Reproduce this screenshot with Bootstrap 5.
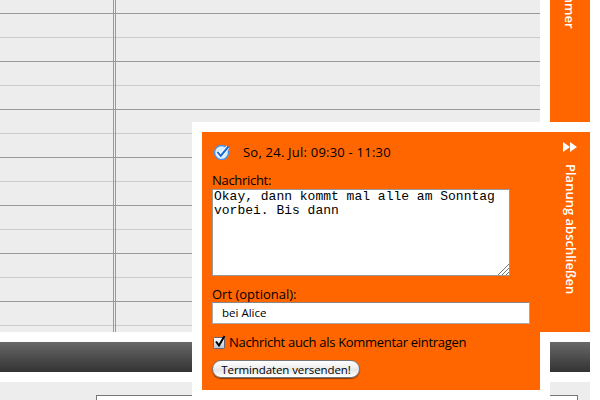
<!DOCTYPE html>
<html lang="de">
<head>
<meta charset="utf-8">
<title>Terminplanung</title>
<link href="https://cdn.jsdelivr.net/npm/bootstrap@5.3.0/dist/css/bootstrap.min.css" rel="stylesheet">
<style>
body{width:600px;height:400px;font-family:"Open Sans",sans-serif;font-size:13px;line-height:18px;color:#000}
.page{width:590px;height:400px}
.calendar{width:540px;height:332px;background:linear-gradient(#999,#999) 113px 0/1px 100% no-repeat,linear-gradient(#999,#999) 115px 0/1px 100% no-repeat,repeating-linear-gradient(#ededed 0 13px,#999 13px 14px,#ededed 14px 37px,#ccc 37px 38px,#ededed 38px 48px)}
.orange{background:#f60}
.side-tab{width:40px;height:122px}
.vert{writing-mode:vertical-rl;color:#fff;font-weight:600;white-space:nowrap}
.side-tab .vert{height:29px;margin-left:11px}
.toolbar{height:30px;margin:10px 0;background:linear-gradient(#686868,#333)}
.comments{height:18px;background:#ededed;padding:13px 12px 0 96px}
.comment-box{height:5px;border:1px solid #777;border-bottom:0}
.popup{left:192px;top:122px;width:398px;height:278px}
.dialog-form{width:358px;height:278px;border:10px solid #fff;padding:11px 10px 0}
.finish{width:50px;height:220px;border:solid #fff;border-width:10px 0;margin-left:-10px}
.finish svg{margin:10px 0 0 23px}
.finish .vert{margin:12px 0 0 22px}
.date-row{height:18px;gap:13px}
.label-msg{height:18px;margin-top:10px}
.label-place{height:17px;margin-top:9px}
.message-wrap{width:298px}
.message{display:block;width:298px;height:87px;border:1px solid #999;border-radius:0;padding:0 1px;margin:0;resize:none;outline:0;overflow:hidden;font:13px/14px "Liberation Mono",monospace}
.grip{right:1px;bottom:1px}
.place{width:318px;height:22px;border:1px solid #aaa;border-top-color:#888;padding:0 9px 2px;font-size:11.5px;background:#fff;outline:0}
.check-row{height:18px;margin-top:9px;gap:2px}
.send{width:148px;height:18px;margin-top:9px;border:1px solid #777;border-radius:9px;padding:0;font-size:11.5px;letter-spacing:-.1px;line-height:15px;background:linear-gradient(#fff,#eee 45%,#e4e4e4 50%,#fff);box-shadow:0 1px 1px #0007;color:#000}
.t-date{letter-spacing:.22px}
.t-check{letter-spacing:-.3px}
</style>
<script src="https://cdn.jsdelivr.net/npm/bootstrap@5.3.0/dist/js/bootstrap.bundle.min.js"></script>
</head>
<body class="bg-white overflow-hidden position-relative">
<main class="page">
  <div class="d-flex justify-content-between">
    <div class="calendar"></div>
    <div class="side-tab orange overflow-hidden"><div class="vert d-flex justify-content-end">Teilnehmer</div></div>
  </div>
  <div class="toolbar"></div>
  <div class="comments"><div class="comment-box bg-white"></div></div>
</main>
<section class="popup position-absolute d-flex align-items-start">
  <form class="dialog-form orange flex-shrink-0">
    <div class="date-row d-flex align-items-center">
      <svg width="18" height="18" viewBox="0 0 18 18"><circle cx="9.5" cy="9.5" r="7" fill="#d9edff" stroke="#4a90e8" stroke-width="1.4"/><path d="M5.5 9l3.2 4L16 4" fill="none" stroke="#fff" stroke-width="3.6"/><path d="M5.5 9l3.2 4L16.5 3.5" fill="none" stroke="#1767d2" stroke-width="2"/></svg>
      <span class="text-nowrap t-date">So, 24. Jul: 09:30 - 11:30</span>
    </div>
    <label class="d-block text-nowrap t-check label-msg" for="msg">Nachricht:</label>
    <div class="position-relative message-wrap">
      <textarea id="msg" class="message" spellcheck="false">Okay, dann kommt mal alle am Sonntag
vorbei. Bis dann</textarea>
      <svg class="grip position-absolute" width="11" height="11" viewBox="0 0 11 11"><path d="M0 11L11 0M4 11L11 4M8 11L11 8" stroke="#777" fill="none"/></svg>
    </div>
    <label class="d-block text-nowrap label-place" for="place">Ort (optional):</label>
    <input id="place" class="place d-block" value="bei Alice">
    <div class="check-row d-flex align-items-center">
      <svg width="15" height="16" viewBox="0 0 15 16"><defs><linearGradient id="cb" x2="0" y2="1"><stop stop-color="#fff"/><stop offset="1" stop-color="#b8c4d0"/></linearGradient></defs><rect x="1.5" y="3.5" width="11" height="11" rx="1" fill="url(#cb)" stroke="#667"/><path d="M4 7.5l3 4L12.5 2" fill="none" stroke="#000" stroke-width="2"/></svg>
      <span class="text-nowrap t-check">Nachricht auch als Kommentar eintragen</span>
    </div>
    <button type="button" class="send d-block text-nowrap">Termindaten versenden!</button>
  </form>
  <div class="finish orange">
    <svg class="d-block" width="14" height="10" viewBox="0 0 14 10"><path d="M0 0l7 5-7 5zM7 0l7 5-7 5z" fill="#fff"/></svg>
    <div class="vert">Planung abschließen</div>
  </div>
</section>
</body>
</html>
